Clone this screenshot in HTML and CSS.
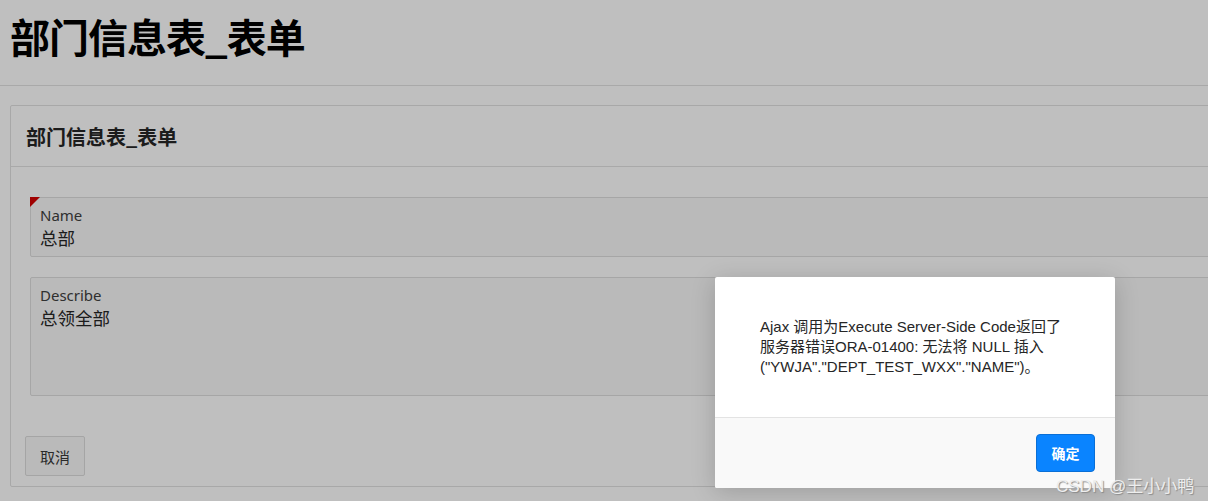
FILE: index.html
```html
<!DOCTYPE html>
<html lang="zh-CN">
<head>
    <meta charset="UTF-8">
    <meta name="viewport" content="width=device-width, initial-scale=1.0">
    <title>部门信息表_表单</title>
    <link rel="stylesheet" href="styles.css">
</head>
<body>
    <header class="page-header">
        <h1>部门信息表_表单</h1>
    </header>

    <main class="page-body">
        <section class="region">
            <div class="region-header">
                <h2>部门信息表_表单</h2>
            </div>
            <div class="region-body">
                <div class="field field-required">
                    <label>Name</label>
                    <div class="field-value">总部</div>
                </div>
                <div class="field field-tall">
                    <label>Describe</label>
                    <div class="field-value">总领全部</div>
                </div>
            </div>
            <div class="region-buttons">
                <button class="btn">取消</button>
            </div>
        </section>
    </main>

    <!-- 遮罩层 -->
    <div class="overlay"></div>

    <div class="dialog">
        <div class="dialog-body">
            <p>Ajax 调用为Execute Server-Side Code返回了服务器错误ORA-01400: 无法将 NULL 插入 ("YWJA"."DEPT_TEST_WXX"."NAME")。</p>
        </div>
        <div class="dialog-footer">
            <button class="btn-primary">确定</button>
        </div>
    </div>

    <div class="watermark">CSDN @王小小鸭</div>
</body>
</html>
```

FILE: styles.css
```css
* {
    margin: 0;
    padding: 0;
    box-sizing: border-box;
}

body {
    font-family: 'Noto Sans', 'Noto Sans CJK SC', sans-serif;
    background-color: #ffffff;
    color: #262626;
    width: 1208px;
    height: 501px;
    overflow: hidden;
    position: relative;
}

.page-header {
    height: 86px;
    padding: 12px 10px 0;
    border-bottom: 1px solid #e2e2e2;
}

.page-header h1 {
    font-size: 40px;
    line-height: 48px;
    font-weight: 700;
    color: #000000;
    font-family: 'Noto Sans CJK SC', sans-serif;
    letter-spacing: -1px;
}

.page-body {
    padding: 19px 0 0 10px;
}

.region {
    width: 1260px;
    border: 1px solid #e0e0e0;
    border-radius: 2px;
    background: #ffffff;
}

.region-header {
    height: 61px;
    padding: 0 15px;
    display: flex;
    align-items: center;
    border-bottom: 1px solid #e2e2e2;
}

.region-header h2 {
    font-size: 20px;
    font-weight: 700;
    color: #262626;
    font-family: 'Noto Sans CJK SC', sans-serif;
}

.region-body {
    padding: 30px 0 0 19px;
    display: flex;
    flex-direction: column;
    gap: 20px;
}

.field {
    position: relative;
    height: 60px;
    padding: 7px 9px;
    background: #f8f8f8;
    border: 1px solid #dedede;
    border-radius: 2px;
}

.field-tall {
    height: 119px;
}

.field-required::before {
    content: '';
    position: absolute;
    top: -1px;
    left: -1px;
    border-top: 10px solid #d40000;
    border-right: 10px solid transparent;
}

.field label {
    display: block;
    font-size: 15px;
    line-height: 20px;
    color: #404040;
}

.field-value {
    font-size: 17.5px;
    line-height: 27px;
    color: #262626;
}

.region-buttons {
    padding: 40px 14px 10px;
}

.btn {
    width: 60px;
    height: 40px;
    font-family: inherit;
    font-size: 15px;
    color: #383838;
    background: #f8f8f8;
    border: 1px solid #dcdcdc;
    border-radius: 2px;
}

.overlay {
    position: absolute;
    inset: 0;
    background: rgba(0, 0, 0, 0.25);
}

.dialog {
    position: absolute;
    left: 715px;
    top: 277px;
    width: 400px;
    height: 211px;
    background: #ffffff;
    border-radius: 2px;
    box-shadow: 0 4px 24px rgba(0, 0, 0, 0.18);
    display: flex;
    flex-direction: column;
}

.dialog-body {
    height: 140px;
    padding: 40px 45px 0;
    font-family: 'Liberation Sans', 'Noto Sans CJK SC', sans-serif;
    font-size: 15px;
    line-height: 20px;
    color: #262626;
}

.dialog-footer {
    flex: 1;
    display: flex;
    justify-content: flex-end;
    align-items: flex-start;
    padding: 16px 20px 0;
    background: #f9f9f9;
    border-top: 1px solid #e3e3e3;
    border-radius: 0 0 2px 2px;
}

.btn-primary {
    width: 59px;
    height: 38px;
    font-family: inherit;
    font-size: 14px;
    font-weight: 700;
    color: #ffffff;
    background: #0a84ff;
    border: 1px solid #0a6fd6;
    border-radius: 4px;
}

.watermark {
    position: absolute;
    left: 1056px;
    top: 472px;
    font-family: 'Liberation Sans', 'Noto Sans CJK SC', sans-serif;
    font-size: 17px;
    color: #eeeeee;
    text-shadow: 1px 1px 1px #8a8a8a;
    white-space: nowrap;
}
```
